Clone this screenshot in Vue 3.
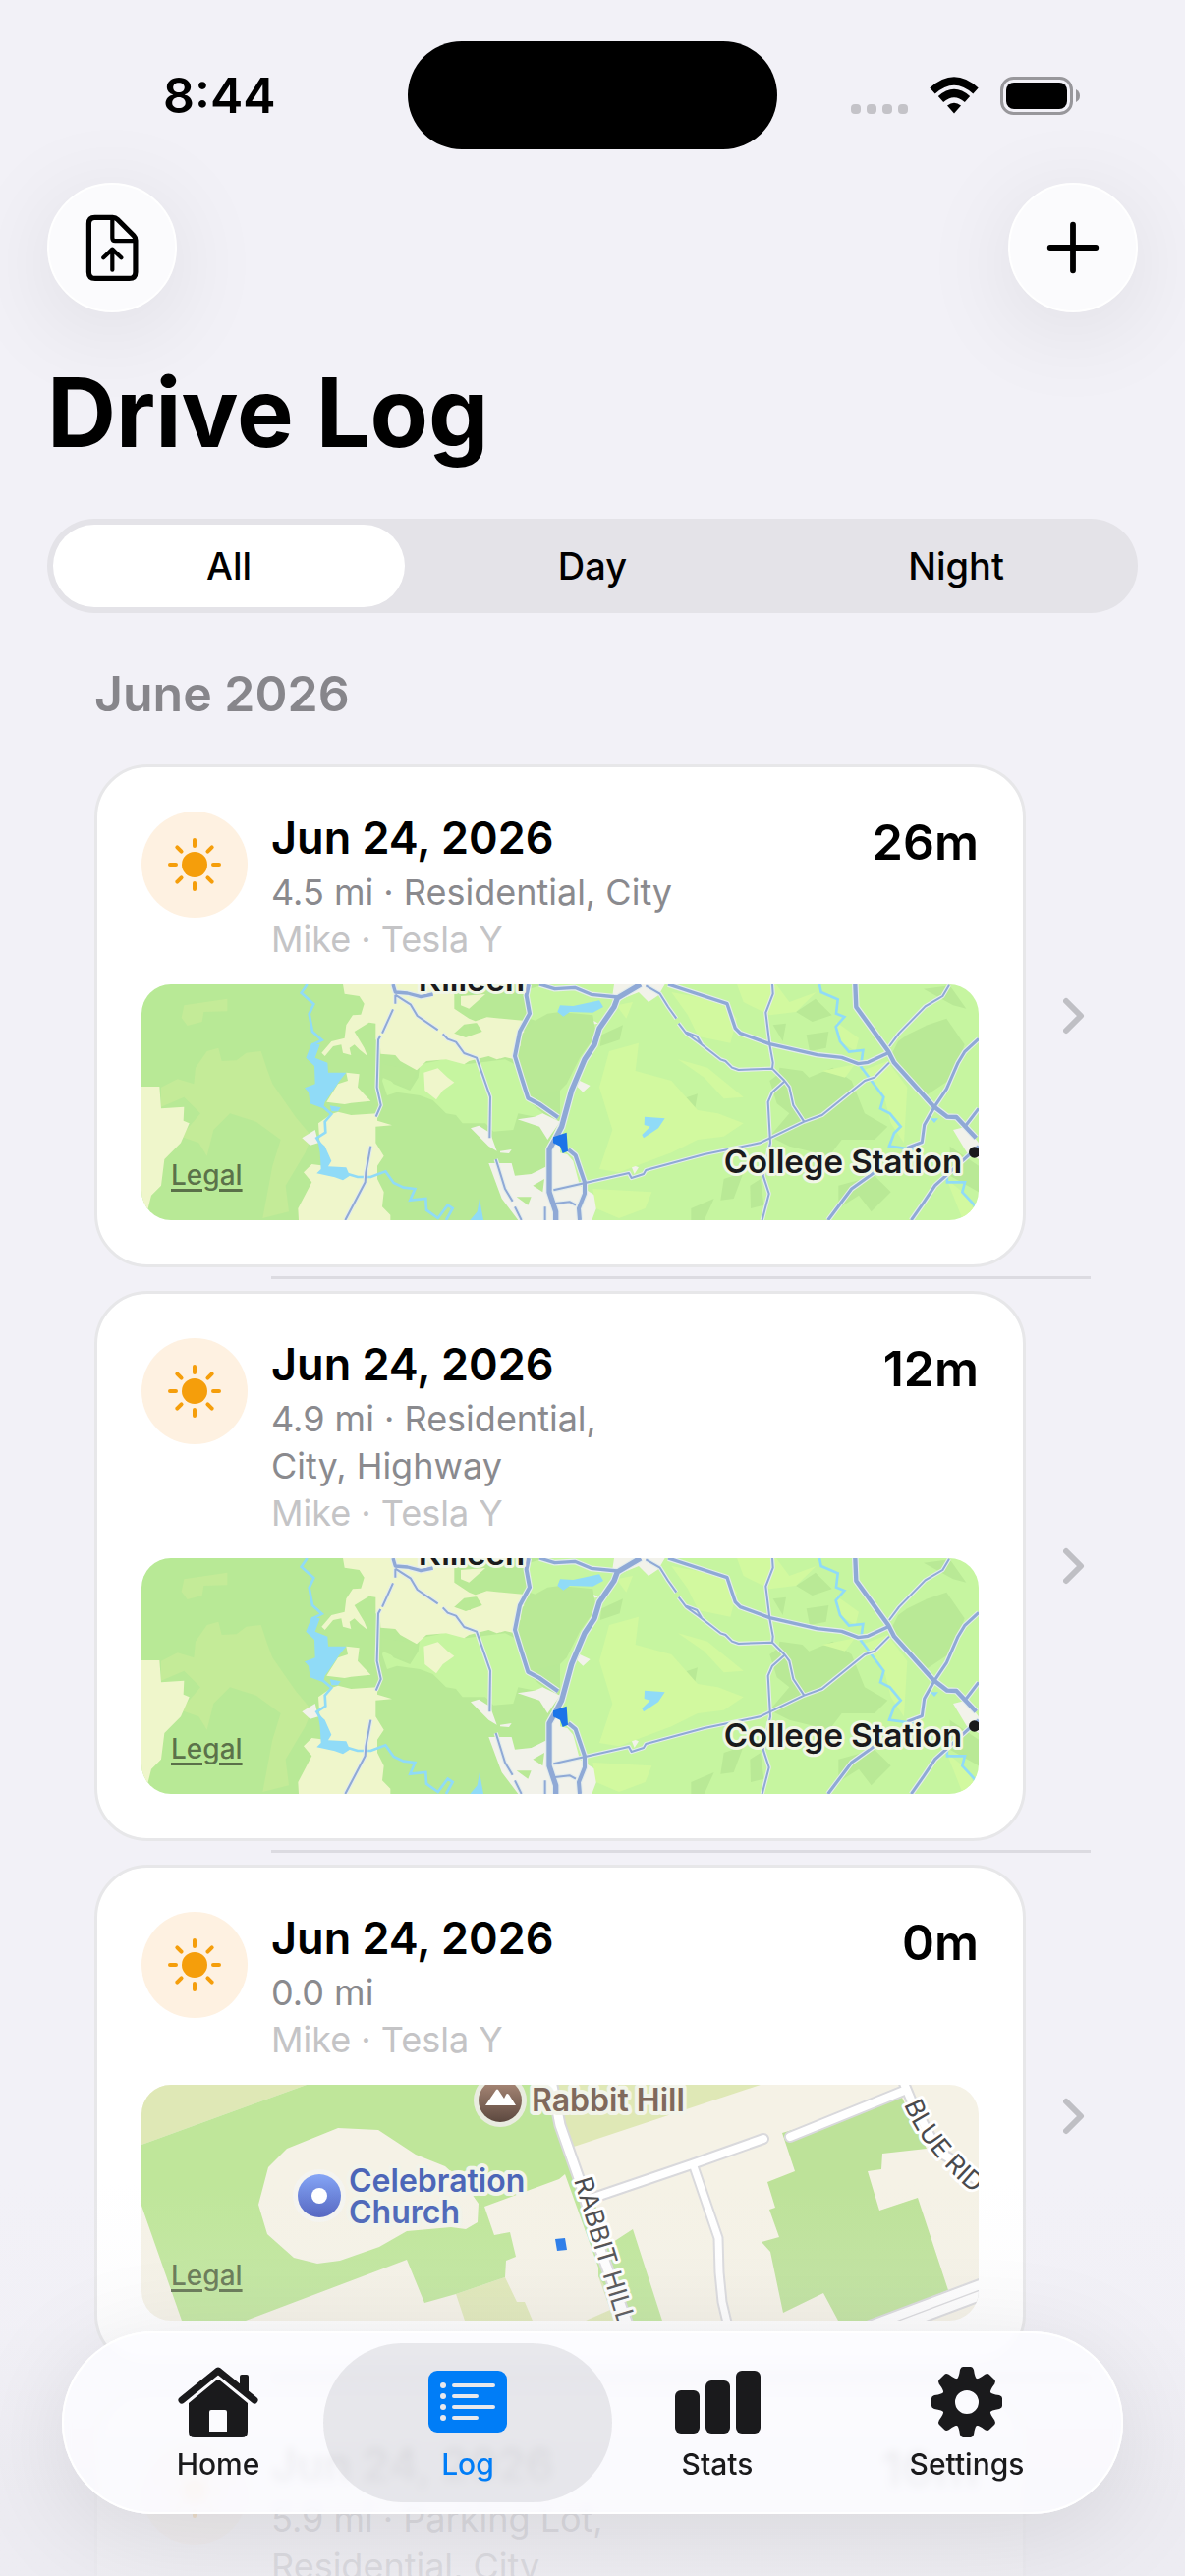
<script setup>
import { ref } from 'vue'

const filters = ['All', 'Day', 'Night']
const activeFilter = ref('All')
const activeTab = ref('Log')

const tabs = ['Home', 'Log', 'Stats', 'Settings']

const drives = [
  { id: 1, date: 'Jun 24, 2026', details: '4.5 mi · Residential, City', by: 'Mike · Tesla Y', time: '26m', map: 'region' },
  { id: 2, date: 'Jun 24, 2026', details: '4.9 mi · Residential,\nCity, Highway', by: 'Mike · Tesla Y', time: '12m', map: 'region' },
  { id: 3, date: 'Jun 24, 2026', details: '0.0 mi', by: 'Mike · Tesla Y', time: '0m', map: 'street' },
  { id: 4, date: 'Jun 24, 2026', details: '5.9 mi · Parking Lot,\nResidential, City', by: 'Mike · Tesla Y', time: '10m', map: 'region' },
]

const rays = [0, 45, 90, 135, 180, 225, 270, 315]

// Regional map, drawn on a 2556 x 726 grid
const regionRoads = [
  { w: 6, d: 'M775 38V65M768 82L735 155M730 162L723 175L719 320L731 375L716 410M775 38L822 68L842 102L905 145M920 157L935 173L960 182L985 216L1023 230L1065 350L1063 475M1082 540L1110 630L1133 668M1140 685L1160 726M700 500L685 580L683 610L622 726M1232 685V726' },
  { w: 6, d: 'M1540 10L1583 35L1608 75L1633 110M1640 125L1663 155L1698 180L1768 235L1783 240L1803 260L1823 267L1926 263L1963 300L1978 320L1990 375L2023 425M1663 152L1696 165L1710 188' },
  { w: 6, d: 'M1926 6L1928 35L1906 92L1918 190L1928 245L1926 263M1963 302L1926 335L1913 365L1920 490L1898 590L1916 645L1895 726' },
  { w: 6, d: 'M1258 634L1488 582L1496 597L1533 585L1540 573L1718 525L1888 490L2023 425L2078 405L2208 300L2238 290L2283 245M2283 195L2313 155L2393 73L2446 42L2466 8M1262 675L1308 670L1326 680' },
  { w: 10, d: 'M768 6L775 30L812 33L853 44L890 36M1215 6L1262 20L1323 16L1373 37L1453 45' },
  { w: 10, d: 'M1608 6L1788 65L1813 140L1828 155L1918 188L2063 221L2138 229L2188 248L2218 244L2280 215' },
  { w: 9, d: 'M2556 172L2513 212L2493 245L2458 325L2421 380L2390 435L2383 488L2338 505M2556 385L2518 435M2556 500L2423 620L2388 672L2350 726M2238 580L2168 630L2096 726' },
  { w: 12, d: 'M1182 6L1175 40L1185 95L1155 150L1140 225L1160 290L1180 353L1215 372L1272 412M1303 510L1325 528L1353 610V645L1335 690L1338 726' },
  { w: 13, d: 'M2179 6L2182 75L2280 210L2298 245L2418 378L2460 410L2488 411L2548 475' },
  { w: 16, d: 'M1524 6L1453 48L1443 75L1398 140L1383 190L1353 235L1313 330L1283 440L1262 480L1245 510V640L1265 700V726' },
]

// Street map, drawn on an 852 x 240 grid
const streetRoads = [
  { w: 8, d: 'M457 116L560 81L633 55' },
  { w: 7, d: 'M562 83L587 156L588 191L591 221L596 242' },
  { w: 8, d: 'M660 53L776 6' },
  { w: 8, d: 'M775 -4L783 15L811 68L828 78L860 106' },
  { w: 9, d: 'M417 -4L426 41L445 95L467 168L495 244' },
  { w: 9, d: 'M740 246L860 201M764 248L860 212' },
]
</script>

<template>
  <div class="screen">
    <header class="status">
      <span class="clock">8:44</span>
      <span class="island" />
      <span class="indicators">
        <svg width="58" height="38" viewBox="0 0 58 38" fill="#c4c3c8">
          <rect v-for="i in 4" :key="i" :x="(i - 1) * 16" y="28" width="10" height="10" rx="4" />
        </svg>
        <svg width="50" height="38" viewBox="0 0 50 38">
          <g fill="none" stroke="#000" stroke-width="8">
            <path d="M3 14.500Q25 -5.500 47 14.500" />
            <path d="M11.500 23Q25 11 38.500 23" />
          </g>
          <path d="M18 29.500Q25 24 32 29.500L25 37.500Z" />
        </svg>
        <svg width="82" height="39" viewBox="0 0 82 39">
          <rect x="1.500" y="1.500" width="71" height="36" rx="12" fill="none" stroke="#98979b" stroke-width="3" />
          <rect x="6" y="6" width="62" height="27" rx="8" />
          <path d="M77 13Q81 15 81 19.500T77 26Z" fill="#98979b" />
        </svg>
      </span>
    </header>

    <div class="toolbar">
      <button class="round-btn" aria-label="Export">
        <svg viewBox="24 48 396 396" fill="none" stroke="#000" stroke-linecap="round" stroke-linejoin="round">
          <path stroke-width="16" d="M168 151H224Q233 151 239 157L290 208Q296 214 296 223V323Q296 343 276 343H169Q149 343 149 323V170Q149 151 168 151Z" />
          <path stroke-width="13" d="M223 156V216Q223 225 232 225H292" />
          <path stroke-width="13" d="M223 316V252M195 278L223 251L251 278" />
        </svg>
      </button>
      <button class="round-btn" aria-label="Add drive">
        <svg viewBox="0 0 132 132" stroke="#000" stroke-width="6" stroke-linecap="round">
          <path d="M42 66H90M66 42V90" />
        </svg>
      </button>
    </div>

    <h1 class="title">Drive Log</h1>

    <div class="segments">
      <button
        v-for="filter in filters"
        :key="filter"
        class="segment"
        :class="{ active: filter === activeFilter }"
        :aria-pressed="filter === activeFilter"
        @click="activeFilter = filter"
      >
        {{ filter }}
      </button>
    </div>

    <main class="list">
      <h2 class="month">June 2026</h2>

      <article v-for="drive in drives" :key="drive.id" class="row">
        <div class="card">
          <div class="card-head">
            <span class="badge">
              <svg width="56" height="56" viewBox="-28 -28 56 56" fill="#f59e0b">
                <circle r="13" />
                <rect v-for="r in rays" :key="r" x="-2" y="-27" width="4" height="10" rx="2" :transform="`rotate(${r})`" />
              </svg>
            </span>
            <div class="info">
              <h3 class="date">{{ drive.date }}</h3>
              <p class="details">{{ drive.details }}</p>
              <p class="by">{{ drive.by }}</p>
            </div>
            <span class="time">{{ drive.time }}</span>
          </div>

          <div class="map">
            <svg v-if="drive.map === 'region'" viewBox="0 6 2556 720" preserveAspectRatio="xMidYMid slice">
              <rect width="1290" height="726" fill="#b8e996" />
              <rect x="1278" width="1278" height="726" fill="#c6f5a0" />
              <g fill="#c4eb98">
                <path d="M165 260L200 210L235 200L245 240L290 238L320 215L365 210L385 270L400 310L470 410L520 470L500 520L440 620L450 700L370 720L400 560L425 480L350 425L270 400L220 450L200 530L175 490L120 470L180 400L130 350L60 380V320L110 295L160 310Z" />
                <path d="M130 70L262 50V88L190 90L185 120L140 132L122 108Z" />
              </g>
              <g fill="#c6f5a0">
                <path d="M735 300L742 275L770 310L820 330L845 290L850 250L900 240L930 232L990 250L1110 235L1140 250L1150 285L1170 300L1180 360L1250 420L1150 400L1135 450L1075 455L1050 430H980L960 405L930 400L890 360L850 345L780 335L750 345Z" />
                <path d="M1185 20L1230 6H1278V170L1240 130L1185 110Z" />
              </g>
              <g fill="#eff6cb">
                <path d="M0 318H55L60 385L130 380L128 422L146 430L120 490L70 540L60 620L30 650L20 690L0 700Z" />
                <path d="M615 6H955V80L1000 110L1030 122L985 128L955 155L990 168L1040 150L1020 118L1055 106L1180 118L1165 145L1185 172L1150 200L1140 235L1110 228L1085 235L1060 225L1000 240L985 250L930 235L870 240L840 268L790 240L775 222L730 218L728 180L715 175V125L695 122L650 150L680 200L690 225L665 205L650 190L635 200L640 222L615 215L610 190L585 195L560 225L550 215L580 180L620 170L625 130L645 100L670 98L680 65L665 42L620 35Z" />
                <path d="M625 275L665 280L660 320L700 362L640 368L620 372L565 365L600 310L630 300Z" />
                <path d="M600 395L640 405L720 400L720 422L765 436L715 440L715 490L740 530L720 560V600L740 640L735 685L760 710V726H480L478 690L520 610L495 580L520 555L560 560L545 500L540 430L580 402Z" />
                <path d="M862 275L905 262L935 290L955 305L920 330L900 358L865 330Z" />
                <path d="M975 42L1050 36L1000 80L975 70Z" />
              </g>
              <path fill="#b9e996" d="M735 250L840 268L820 325L735 290ZM955 155L1000 130L1005 165Z" />
              <g fill="#f2f2ea">
                <path d="M1005 445L1030 437L1065 460L1085 515L1060 500ZM1095 515L1130 510L1122 522L1095 520Z" />
                <path d="M1060 552L1130 552L1140 590L1190 585L1240 560V500L1278 420V726H1150L1100 660Z" />
                <path d="M1148 418L1200 410L1225 400L1278 425L1240 480L1215 440Z" />
                <path d="M490 475L530 450L540 490L515 497Z" />
                <path d="M1443 6H1598L1578 40L1548 60L1518 30L1468 50L1448 70L1438 40Z" />
                <path d="M1338 300L1370 315L1348 335L1330 318ZM1493 555L1518 565L1505 585ZM1370 110L1395 125L1375 128Z" />
                <path d="M1278 520L1300 525L1318 545L1338 620L1400 660L1375 726H1278Z" />
                <path d="M2478 450L2518 440L2556 490V540L2520 520Z" />
              </g>
              <g fill="#b9e996">
                <path d="M1278 90L1378 100L1388 160L1338 230L1298 310L1278 330L1185 350L1150 260L1160 160L1195 120L1240 95ZM1145 655L1190 655L1180 680ZM1195 620L1230 600L1225 640Z" />
                <path d="M2338 160L2400 130L2458 110L2513 190L2478 290L2388 350L2328 280L2290 220L2310 180Z" />
                <path d="M1918 300L1945 280L1948 260L2018 270L2038 290L2110 260L2168 300L2208 400L2278 440L2238 480H2138L2100 530L1978 500L1918 470L1978 400L1940 370Z" />
                <path d="M2128 620L2238 590L2288 640L2228 700L2190 650L2128 690ZM1778 600L1838 580L1808 660L1768 665ZM1623 365L1698 340L1688 395L1663 400ZM1678 690L1748 660L1718 726H1678ZM1858 620L1890 600L1900 680L1860 690Z" />
                <path d="M1998 90L2058 50L2108 100L2048 120ZM2388 20L2468 10L2518 80L2478 70ZM1928 130L1968 125L1958 180ZM2468 500L2556 560V640L2468 590ZM2030 160L2098 150L2090 200L2040 210ZM1405 160L1470 130L1460 175L1400 195Z" />
              </g>
              <g fill="#d2f99f">
                <path d="M1398 320L1428 210L1518 185L1508 270L1618 300L1698 390L1760 400L1838 430L1778 470L1698 480L1618 520L1458 580L1398 570L1438 450Z" />
                <path d="M1618 30L1778 60L1818 110L1798 185L1700 165L1668 100ZM1818 6H1938L1978 60L2060 30L1998 90L1918 100L1838 60Z" />
                <path d="M2198 270L2278 240L2338 320L2328 490L2288 430L2268 350ZM1638 235L1728 260L1838 350L1778 355L1718 290ZM1378 630L1558 640L1538 690L1458 720L1388 690ZM2458 600L2520 650L2556 726H2508ZM2078 270L2178 250L2148 290ZM1450 70L1500 60L1480 110ZM2120 120L2190 170L2180 210L2130 180Z" />
              </g>
              <g fill="#90dbf7">
                <path d="M520 185L545 190L530 230L568 245L570 275H625L605 300L585 330L560 365L555 385L515 370L510 335L498 322L530 310L528 255L502 230Z" />
                <path d="M575 376L608 382L600 394H580ZM1032 660L1044 726H1003L1025 700ZM538 480L560 500L580 545L570 562L625 565L636 590L615 604L590 595L535 583L548 570L545 520Z" />
                <path d="M1278 70L1318 72L1398 55L1410 75L1378 92L1308 90L1288 104L1270 90ZM1536 410L1598 415L1578 445L1533 475L1528 465L1553 440L1535 435ZM2408 415H2433L2421 429Z" />
              </g>
              <g fill="none" stroke="#90dbf7" stroke-width="8">
                <path d="M506 6L488 32L526 66L512 96L522 150L551 176L522 190L510 230M555 380L580 402L560 425L562 458L535 475L550 500M630 585L660 594H700L745 577L770 612L800 626L835 630L820 665L868 660L870 695L905 720L935 680L950 690L930 726" />
                <path d="M2070 6L2075 30L2126 52L2121 95L2146 105L2120 135L2133 180L2160 212L2203 207L2196 257L2266 350L2256 385L2285 400L2318 440L2298 460L2283 500L2358 510M2458 570L2460 610H2514L2506 640L2543 680L2553 726" />
              </g>
              <g fill="none" stroke-linejoin="round">
                <path v-for="(road, i) in regionRoads" :key="'c' + i" :d="road.d" stroke="#e3ecec" :stroke-width="road.w + 7" />
                <path v-for="(road, i) in regionRoads" :key="'r' + i" :d="road.d" stroke="#8fa9d6" :stroke-width="road.w" />
              </g>
              <path d="M1257 472L1298 458L1302 515L1286 522L1278 500L1257 490Z" fill="#1b74e8" />
              <circle cx="2543" cy="519" r="17" fill="#1a1a1c" />
              <g class="city">
                <text x="845" y="28">Killeen</text>
                <text x="1778" y="582">College Station</text>
              </g>
            </svg>

            <svg v-else viewBox="0 0 852 240" preserveAspectRatio="xMidYMid slice">
              <defs>
                <linearGradient id="pin-brown" x2="0" y2="1">
                  <stop offset="0" stop-color="#ad8c7a" />
                  <stop offset="1" stop-color="#5c483f" />
                </linearGradient>
                <linearGradient id="pin-blue" x2="0" y2="1">
                  <stop offset="0" stop-color="#86a6f6" />
                  <stop offset="1" stop-color="#5163c0" />
                </linearGradient>
                <path id="blue-ridge" d="M776 20Q798 75 866 125" />
              </defs>
              <rect width="852" height="240" fill="#f5f2e6" />
              <path fill="#dfe8b6" d="M0 0H168L0 61ZM417 0H630L440 63ZM370 196L382 221H390L398 240H329L320 213ZM465 195L482 188L500 240H452L477 229Z" />
              <path fill="#bfe69a" d="M0 61L168 0H417L446 91L480 160L500 147L530 240H495L465 195V186L431 91L425 96L349 124L359 153L375 150L381 175L371 179L370 196L320 213L288 222L270 178L106 240H41L0 123Z" />
              <path fill="#bde299" d="M652 49L774 13L799 65L754 70L753 86L739 88L751 128L790 115L821 209L745 240H709L694 212L653 232L640 170L631 160L649 155L639 127L645 125L637 99L665 88Z" />
              <path fill="#f5f2e6" d="M200 44L241 46L279 71L309 83L329 101L343 121L342 140L330 147L315 145L270 149L242 165L202 179L179 182L155 176L128 152L119 122L129 84L148 65Z" />
              <g fill="none" stroke-linecap="round" stroke-linejoin="round">
                <path v-for="(road, i) in streetRoads" :key="'c' + i" :d="road.d" stroke="#d9d9dc" :stroke-width="road.w + 4" />
                <path v-for="(road, i) in streetRoads" :key="'r' + i" :d="road.d" stroke="#fff" :stroke-width="road.w" />
              </g>
              <path d="M421 157L431 156L433 168L423 169Z" fill="#2277e8" />
              <g class="street">
                <text transform="translate(440 97) rotate(73)">RABBIT HILL</text>
                <text><textPath href="#blue-ridge">BLUE RID</textPath></text>
              </g>
              <circle cx="365" cy="16" r="27" fill="#e9ece0" />
              <circle cx="365" cy="16" r="22" fill="url(#pin-brown)" />
              <path d="M350 21L361 5Q362 4 363 5L369 14L371 10Q372 8 374 10L381 21Z" fill="#fff" />
              <circle cx="181" cy="113" r="27" fill="#f4f4f0" />
              <circle cx="181" cy="113" r="22" fill="url(#pin-blue)" />
              <circle cx="181" cy="113" r="8" fill="#fff" />
              <g class="place">
                <text class="brown" x="397" y="27">Rabbit Hill</text>
                <text class="blue" x="211" y="109">Celebration</text>
                <text class="blue" x="211" y="141">Church</text>
              </g>
            </svg>
            <a class="legal" href="#legal">Legal</a>
          </div>
        </div>

        <svg class="chevron" width="28" height="40" viewBox="0 0 28 40" fill="none" stroke="#bfbfc4" stroke-width="6" stroke-linecap="round" stroke-linejoin="round">
          <path d="M3 5L18 20L3 35" />
        </svg>
      </article>
    </main>

    <div class="fade" />

    <nav class="tabbar">
      <button
        v-for="tab in tabs"
        :key="tab"
        class="tab"
        :class="{ active: tab === activeTab }"
        @click="activeTab = tab"
      >
        <svg v-if="tab === 'Home'" class="tab-icon" width="82" height="72" viewBox="0 0 82 72">
          <path d="M4 34L41 4L78 34" fill="none" stroke="currentColor" stroke-width="7" stroke-linecap="round" stroke-linejoin="round" />
          <path fill="currentColor" d="M63 10Q63 8 65 8H70Q72 8 72 10V27L63 20Z" />
          <path fill="currentColor" fill-rule="evenodd" d="M11 37L39 14Q41 12 43 14L71 37V66Q71 72 65 72H17Q11 72 11 66ZM32 46V66H50V46Q50 44 48 44H34Q32 44 32 46Z" />
        </svg>
        <svg v-else-if="tab === 'Log'" class="tab-icon" width="80" height="72" viewBox="0 0 80 72">
          <rect y="4" width="80" height="63" rx="9" fill="currentColor" />
          <g fill="#e8e8ec">
            <circle v-for="i in 4" :key="i" cx="15" :cy="8 + i * 11" r="3" />
          </g>
          <path d="M26 19H66M26 30H49M26 41H66M26 52H49" stroke="#e8e8ec" stroke-width="4" stroke-linecap="round" />
        </svg>
        <svg v-else-if="tab === 'Stats'" class="tab-icon" width="87" height="72" viewBox="0 0 87 72" fill="currentColor">
          <rect y="24" width="25" height="44" rx="6" />
          <rect x="31" y="14" width="25" height="54" rx="6" />
          <rect x="62" y="4" width="25" height="64" rx="6" />
        </svg>
        <svg v-else class="tab-icon" width="72" height="72" viewBox="-36 -36 72 72">
          <circle r="19" fill="none" stroke="currentColor" stroke-width="14" />
          <path
            v-for="r in rays"
            :key="r"
            fill="currentColor"
            d="M-11 -22Q-8 -25 -7 -33Q-6 -36 -4 -36H4Q6 -36 7 -33Q8 -25 11 -22Z"
            :transform="`rotate(${r})`"
          />
        </svg>
        <span class="tab-label">{{ tab }}</span>
      </button>
    </nav>
  </div>
</template>

<style>
body {
  margin: 0;
  background: #f2f1f7;
}
</style>

<style scoped>
.screen {
  position: relative;
  display: flex;
  flex-direction: column;
  height: 100vh;
  overflow: hidden;
  background: #f2f1f7;
  color: #000;
  font-family: Inter, 'Liberation Sans', sans-serif;
}

button {
  border: none;
  padding: 0;
  background: none;
  color: inherit;
  font-family: inherit;
  cursor: pointer;
}

h1,
h2,
h3,
p {
  margin: 0;
}

svg {
  display: block;
}

/* Status bar */
.status {
  display: grid;
  grid-template-columns: 1fr 376px 1fr;
  align-items: center;
  padding-top: 42px;
}

.clock {
  padding-left: 166px;
  font-size: 50px;
  font-weight: 600;
}

.island {
  height: 110px;
  border-radius: 55px;
  background: #000;
}

.indicators {
  display: flex;
  justify-content: flex-end;
  align-items: center;
  gap: 22px;
  padding-right: 106px;
}

/* Toolbar */
.toolbar {
  display: flex;
  justify-content: space-between;
  padding: 34px 48px 0;
}

.round-btn {
  width: 132px;
  height: 132px;
  border: 2px solid #fff;
  border-radius: 50%;
  background: #fbfbfd;
  box-shadow: 0 16px 100px rgba(0, 0, 0, 0.09);
}

.title {
  padding: 42px 48px 0;
  font-size: 97px;
  font-weight: 700;
  line-height: 120px;
}

/* Filter */
.segments {
  display: flex;
  margin: 48px 48px 0;
  padding: 6px 0;
  border-radius: 48px;
  background: #e4e3e8;
}

.segment {
  flex: 1;
  height: 84px;
  margin: 0 6px;
  border-radius: 42px;
  font-size: 38px;
  font-weight: 500;
}

.segment.active {
  background: #fff;
}

/* Drives */
.list {
  flex: 1;
  overflow-y: auto;
  padding: 0 96px;
  scrollbar-width: none;
}

.month {
  padding: 52px 0 30px;
  color: #87868b;
  font-size: 50px;
  font-weight: 600;
  line-height: 60px;
}

.row {
  position: relative;
  display: flex;
  align-items: center;
  gap: 38px;
  padding: 12px 0;
}

.row::after {
  content: '';
  position: absolute;
  left: 180px;
  right: 0;
  bottom: 0;
  height: 3px;
  background: #dcdbe1;
}

.card {
  flex: 1;
  padding: 45px;
  border: 3px solid #e7e7e9;
  border-radius: 54px;
  background: #fff;
}

.card-head {
  display: flex;
  align-items: flex-start;
  gap: 24px;
  margin-bottom: 22px;
}

.badge {
  display: flex;
  align-items: center;
  justify-content: center;
  width: 108px;
  height: 108px;
  border-radius: 50%;
  background: #fef1e1;
}

.info {
  flex: 1;
}

.date {
  margin-bottom: 4px;
  font-size: 45px;
  font-weight: 600;
  line-height: 54px;
}

.details,
.by {
  font-size: 36px;
  line-height: 48px;
  white-space: pre-line;
}

.details {
  color: #8a8a8e;
}

.by {
  color: #c4c4c6;
}

.time {
  font-size: 50px;
  font-weight: 600;
  line-height: 62px;
}

.map {
  position: relative;
  height: 240px;
  overflow: hidden;
  border-radius: 30px;
}

.map svg {
  width: 100%;
  height: 100%;
}

.city text {
  fill: #1a1a1c;
  stroke: #f1f6e6;
  stroke-width: 18px;
  stroke-linejoin: round;
  paint-order: stroke;
  font-size: 99px;
  font-weight: 600;
}

.street text {
  fill: #4a4a4c;
  stroke: #fff;
  stroke-width: 6px;
  stroke-linejoin: round;
  paint-order: stroke;
  font-size: 26px;
}

.place text {
  stroke: #f2f4ea;
  stroke-width: 8px;
  stroke-linejoin: round;
  paint-order: stroke;
  font-size: 32px;
  font-weight: 600;
}

.place .brown {
  fill: #80695c;
}

.place .blue {
  fill: #4c66b8;
}

.legal {
  position: absolute;
  left: 30px;
  bottom: 28px;
  color: rgba(50, 60, 40, 0.7);
  font-size: 28px;
  font-weight: 500;
  line-height: 36px;
  text-decoration-thickness: 3px;
  text-underline-offset: 4px;
}

.chevron {
  flex: none;
}

/* Tab bar */
.fade {
  position: absolute;
  left: 0;
  right: 0;
  bottom: 0;
  height: 400px;
  background: linear-gradient(rgba(238, 237, 243, 0), rgba(238, 237, 243, 0.16) 36%, rgba(236, 235, 241, 0.84) 80%);
  pointer-events: none;
}

.tabbar {
  position: absolute;
  left: 63px;
  right: 63px;
  bottom: 63px;
  display: flex;
  height: 186px;
  padding: 0 32px;
  box-sizing: border-box;
  border-radius: 93px;
  background: rgba(251, 251, 255, 0.84);
  backdrop-filter: blur(4px);
  box-shadow:
    inset 0 0 0 2px #fff,
    0 20px 110px rgba(0, 0, 0, 0.1);
}

.tab {
  position: relative;
  flex: 1;
  display: flex;
  flex-direction: column;
  align-items: center;
  padding-top: 36px;
  color: #1a1a1c;
}

.tab.active {
  color: #007df7;
}

.tab.active::before {
  content: '';
  position: absolute;
  inset: 12px -20px;
  border-radius: 81px;
  background: rgba(60, 60, 67, 0.1);
}

.tab-icon,
.tab-label {
  position: relative;
}

.tab-label {
  margin-top: 9px;
  font-size: 30px;
  font-weight: 500;
  line-height: 36px;
}
</style>
